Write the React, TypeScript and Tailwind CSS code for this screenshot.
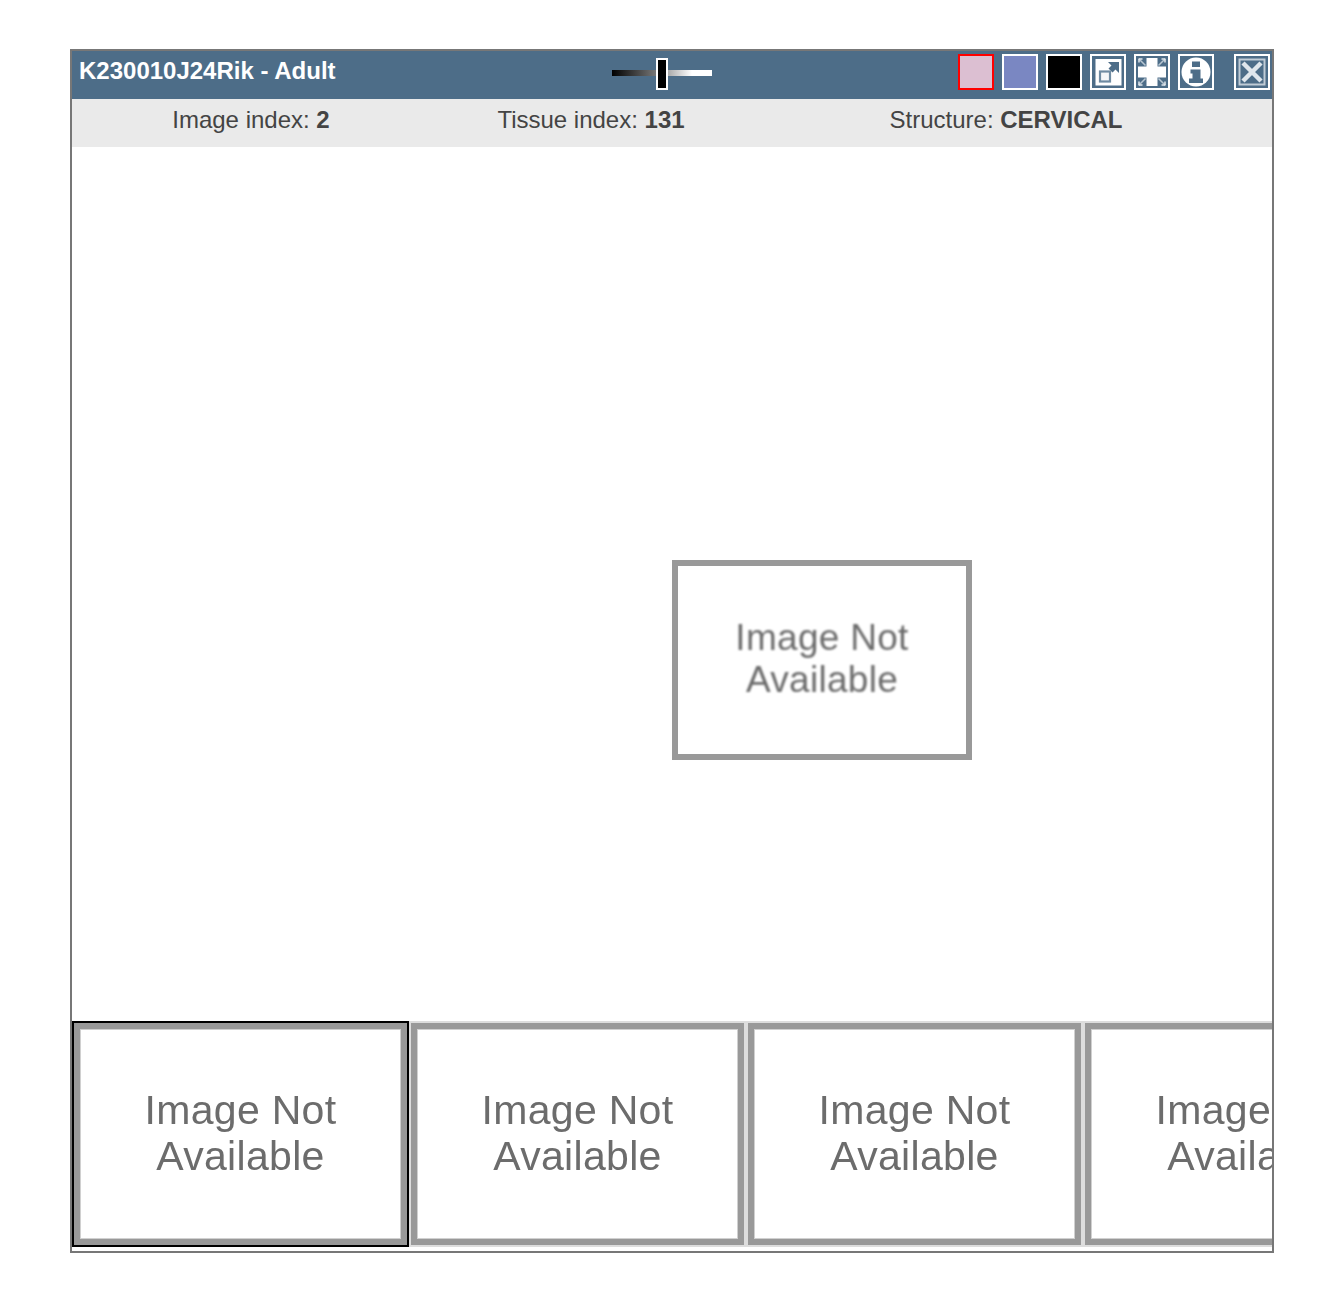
const ImageNotAvailable = ({ large }: { large?: boolean }) => {
  return (
    <div
      className={
        large
          ? "flex h-[200px] w-[300px] shrink-0 items-center justify-center border-[6px] border-[#999999] bg-white pb-[2px]"
          : "flex h-full w-full items-center justify-center border-[6px] border-[#999999] bg-white pb-[3px] shadow-[inset_0_0_0_1px_#d0d0d0]"
      }
    >
      <div
        className={
          large
            ? "whitespace-nowrap text-center text-[37px] leading-[42px] tracking-[0.3px] text-[#6c6c6c] blur-[0.8px]"
            : "whitespace-nowrap text-center text-[41px] leading-[46px] tracking-[0.3px] text-[#6c6c6c] blur-[0.7px]"
        }
      >
        Image Not
        <br />
        Available
      </div>
    </div>
  );
};

const IconBox = ({ children }: { children: React.ReactNode }) => (
  <div className="h-9 w-9 shrink-0 border-2 border-white bg-[#4d6d88]">
    <svg viewBox="0 0 32 32" className="h-8 w-8 blur-[0.5px]">
      {children}
    </svg>
  </div>
);

export default function App() {
  return (
    <div className="min-h-[1290px] bg-white pl-[70px] pt-[49px] font-['Liberation_Sans',Arial,sans-serif]">
      <div className="flex h-[1204px] w-[1204px] flex-col border-2 border-[#777777] bg-white">
        {/* title bar */}
        <div className="flex h-12 shrink-0 items-start bg-[#4d6d88] pt-[3px]">
          <div className="w-[540px] shrink-0 pl-[7px] text-2xl leading-[34px] font-bold text-white">
            K230010J24Rik - Adult
          </div>
          <div className="relative mt-4 h-1.5 w-[100px] shrink-0 bg-[linear-gradient(to_right,#000000_0%,#777777_44%,#aaaaaa_56%,#ffffff_80%)]">
            <div className="absolute left-11 top-[-12px] h-8 w-3 border-2 border-white bg-black" />
          </div>
          <div className="ml-[246px] flex shrink-0 gap-2">
            <div className="h-9 w-9 border-2 border-[#ff0000] bg-[#dcbfd2]" />
            <div className="h-9 w-9 border-2 border-white bg-[#7a87c2]" />
            <div className="h-9 w-9 border-2 border-white bg-black" />
            <IconBox>
              <rect x="3.5" y="3" width="26" height="26.5" fill="#ffffff" />
              <path d="M16 6H27V17L23.5 13.5L20.5 16.5L16.5 12.5L19.5 9.5Z" fill="#4d6d88" />
              <rect x="8" y="15.5" width="10" height="10" fill="#f4f6f8" stroke="#6f8ba2" strokeWidth="2.2" />
            </IconBox>
            <IconBox>
              <path d="M10.5 2H21.5V10.5H30V21.5H21.5V30H10.5V21.5H2V10.5H10.5Z" fill="#ffffff" />
              <path d="M2.5 2.5L9.5 9.5M29.5 2.5L22.5 9.5M2.5 29.5L9.5 22.5M29.5 29.5L22.5 22.5" stroke="#b7c6d2" strokeWidth="1.5" />
              <path d="M3 3H6.5M3 3V6.5M29 3H25.5M29 3V6.5M3 29H6.5M3 29V25.5M29 29H25.5M29 29V25.5" stroke="#dfe6ec" strokeWidth="1.5" />
            </IconBox>
            <IconBox>
              <circle cx="16" cy="16" r="14.5" fill="#ffffff" />
              <rect x="12" y="5.5" width="8" height="5.5" fill="#4d6d88" />
              <path d="M10.5 13.5H20.5V22.5H23V27H9V22.5H12.5V17.5H10.5Z" fill="#4d6d88" />
            </IconBox>
            <div className="ml-3">
              <IconBox>
                <rect x="3.5" y="3.5" width="25" height="25" fill="none" stroke="#c0ccd6" strokeWidth="2" />
                <path d="M7 7L25 25M25 7L7 25" stroke="#dfe6ec" strokeWidth="4.5" />
              </IconBox>
            </div>
          </div>
        </div>

        {/* info bar */}
        <div className="flex h-12 shrink-0 bg-[#eaeaea] text-2xl leading-[42px] text-[#444444]">
          <div className="w-[358px] text-center">
            Image index: <b>2</b>
          </div>
          <div className="w-[322px] text-center">
            Tissue index: <b>131</b>
          </div>
          <div className="w-[508px] text-center">
            Structure: <b>CERVICAL</b>
          </div>
        </div>

        {/* main image */}
        <div className="h-[874px] shrink-0 overflow-hidden pl-[600px] pt-[413px]">
          <ImageNotAvailable large />
        </div>

        {/* thumbnail strip */}
        <div className="flex h-[226px] shrink-0 overflow-hidden">
          <div className="h-full w-[337px] shrink-0 border-2 border-black">
            <ImageNotAvailable />
          </div>
          <div className="h-full w-[337px] shrink-0 border-2 border-[#dddddd]">
            <ImageNotAvailable />
          </div>
          <div className="h-full w-[337px] shrink-0 border-2 border-[#dddddd]">
            <ImageNotAvailable />
          </div>
          <div className="h-full w-[337px] shrink-0 border-2 border-[#dddddd]">
            <ImageNotAvailable />
          </div>
        </div>
      </div>
    </div>
  );
}
